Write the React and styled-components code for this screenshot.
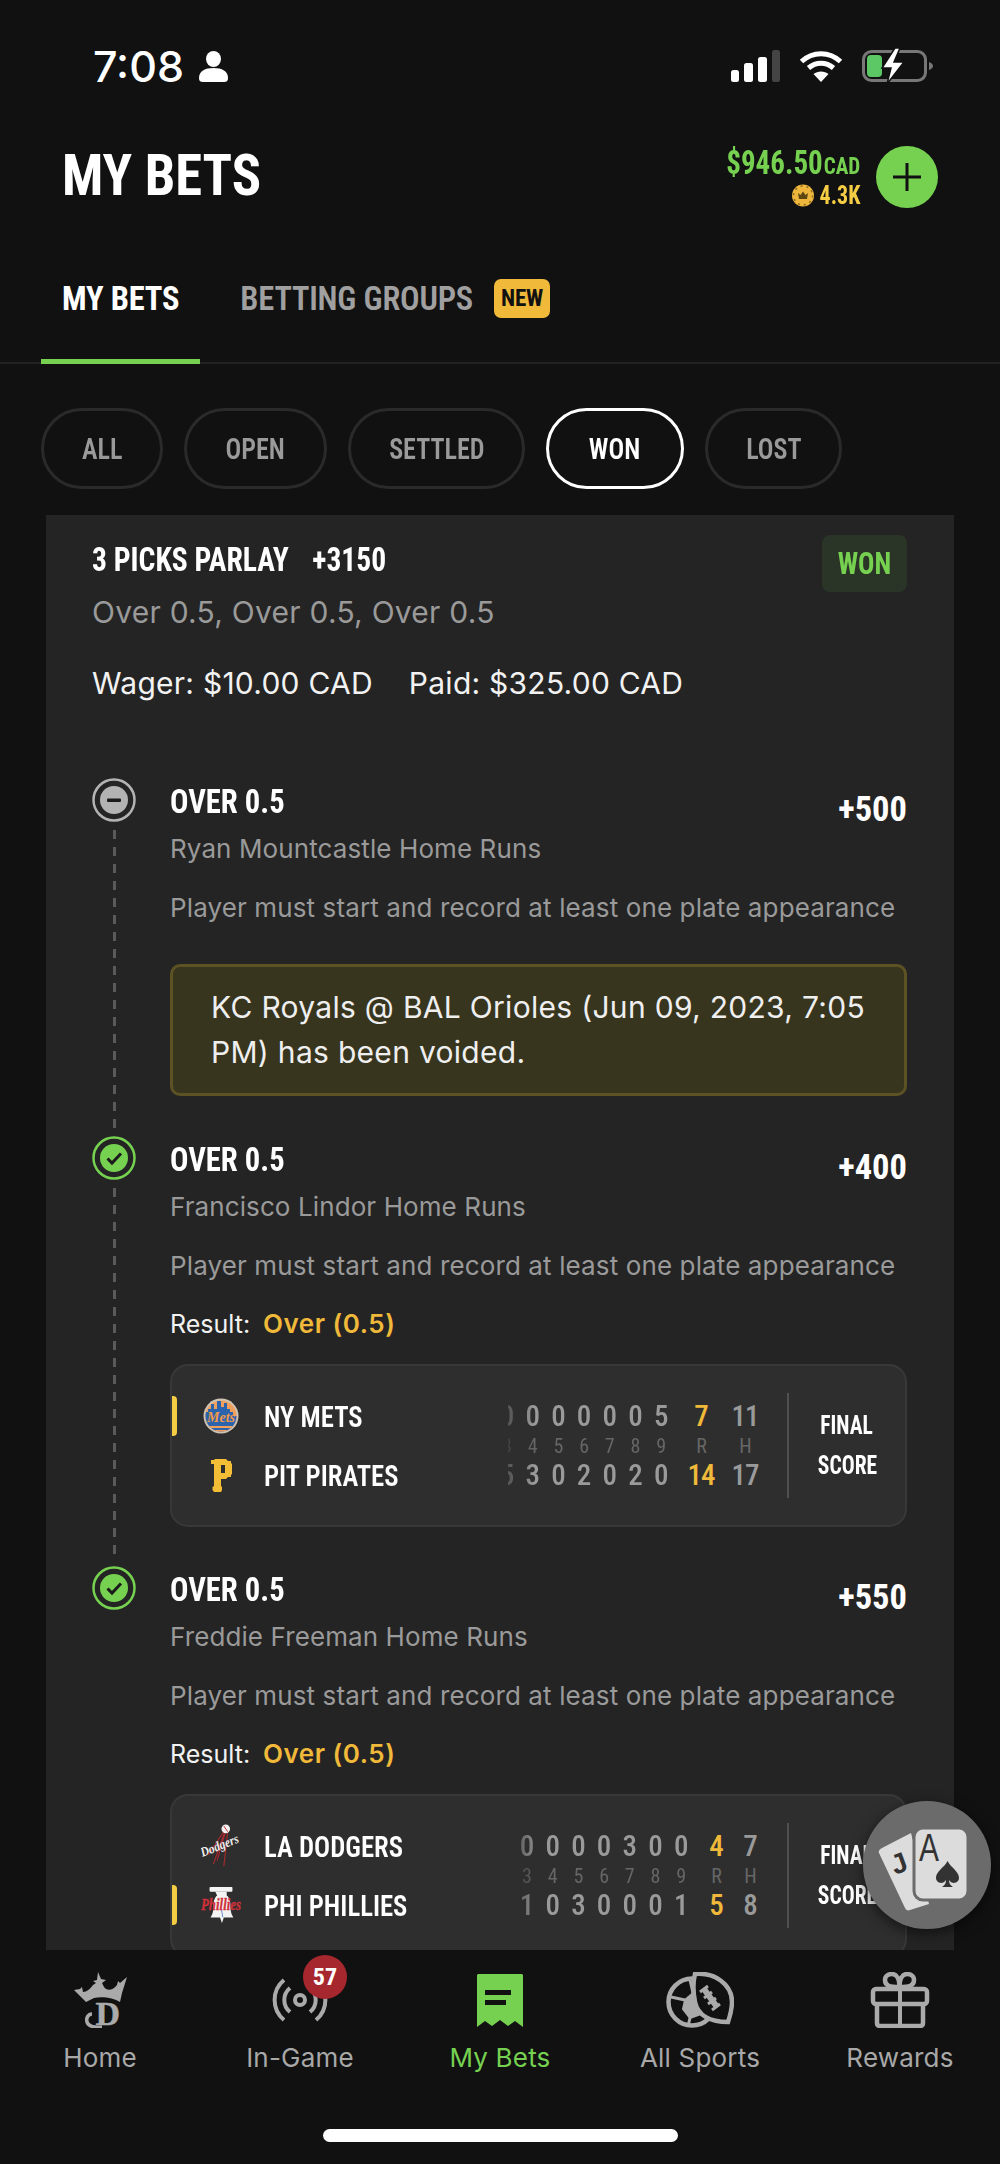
import styled, { createGlobalStyle } from "styled-components";

const narrow = `"Roboto Condensed", "Liberation Sans Narrow", "DejaVu Sans Condensed", sans-serif`;
const body = `Inter, "Noto Sans", sans-serif`;

const GlobalStyle = createGlobalStyle`
  html, body {
    margin: 0;
    padding: 0;
    background: #111111;
  }
  * {
    box-sizing: border-box;
  }
`;

const pills = [
  { label: "ALL", width: 122 },
  { label: "OPEN", width: 143 },
  { label: "SETTLED", width: 177 },
  { label: "WON", width: 138, active: true },
  { label: "LOST", width: 137 },
];

const legs = [
  {
    status: "void",
    odds: "+500",
    player: "Ryan Mountcastle Home Runs",
    voided: "KC Royals @ BAL Orioles (Jun 09, 2023, 7:05 PM) has been voided.",
  },
  {
    status: "won",
    odds: "+400",
    player: "Francisco Lindor Home Runs",
    game: {
      inningsWidth: 166,
      rWidth: 30,
      hWidth: 34,
      labels: [3, 4, 5, 6, 7, 8, 9],
      teams: [
        { name: "NY METS", logo: "mets", winner: true, innings: [0, 0, 0, 0, 0, 0, 5], r: 7, h: 11 },
        { name: "PIT PIRATES", logo: "pirates", innings: [5, 3, 0, 2, 0, 2, 0], r: 14, h: 17 },
      ],
    },
  },
  {
    status: "won",
    odds: "+550",
    player: "Freddie Freeman Home Runs",
    game: {
      inningsWidth: 180,
      rWidth: 20,
      hWidth: 24,
      labels: [3, 4, 5, 6, 7, 8, 9],
      teams: [
        { name: "LA DODGERS", logo: "dodgers", innings: [0, 0, 0, 0, 3, 0, 0], r: 4, h: 7 },
        { name: "PHI PHILLIES", logo: "phillies", winner: true, innings: [1, 0, 3, 0, 0, 0, 1], r: 5, h: 8 },
      ],
    },
  },
];

function Signal() {
  return (
    <svg width="49" height="32" viewBox="0 0 49 32">
      <rect x="0" y="20" width="8" height="12" rx="2.5" fill="#fff" />
      <rect x="13" y="13" width="9" height="19" rx="2.5" fill="#fff" />
      <rect x="27" y="7" width="9" height="25" rx="2.5" fill="#fff" />
      <rect x="41" y="0" width="8" height="32" rx="2.5" fill="#444" />
    </svg>
  );
}

function Wifi() {
  return (
    <svg width="44" height="32" viewBox="0 0 44 32" fill="none" stroke="#fff" strokeWidth="5">
      <path d="M2.5 11.5C13.5 1 30.5 1 41.5 11.5" />
      <path d="M9.5 18C17 11.5 27 11.5 34.5 18" />
      <path d="M22 32L14.5 24C18.5 20.5 25.5 20.5 29.5 24Z" fill="#fff" stroke="none" />
    </svg>
  );
}

function Battery() {
  return (
    <svg width="71" height="36" viewBox="0 0 71 36" fill="none">
      <rect x="1.5" y="3.5" width="62" height="29" rx="8" stroke="#777" strokeWidth="3" />
      <path d="M67 14v8c2.500-.8 4-2.400 4-4s-1.500-3.200-4-4z" fill="#777" />
      <rect x="5" y="7" width="15" height="22" rx="4" fill="#5cc765" />
      <path d="M33 0L20 20h9l-4 16 17-22h-10l6-14z" fill="#fff" stroke="#111" strokeWidth="1.500" />
    </svg>
  );
}

function Person() {
  return (
    <svg width="29" height="31" viewBox="0 0 29 31" fill="#fff">
      <ellipse cx="14.500" cy="8" rx="7.500" ry="8" />
      <path d="M0 27c0-7 6-10 14.500-10S29 20 29 27c0 3-1.500 4-4 4H4c-2.500 0-4-1-4-4z" />
    </svg>
  );
}

function Coin() {
  return (
    <svg width="22" height="23" viewBox="0 0 22 23">
      <circle cx="11" cy="11.500" r="11" fill="#eeb63c" />
      <circle cx="11" cy="11.500" r="9.500" fill="none" stroke="#8a6a1c" strokeWidth="1.500" strokeDasharray="2 4" />
      <path d="M6 9l2.500 2L11 7.500 13.500 11 16 9l-1 6H7z" fill="#5d4712" />
    </svg>
  );
}

function LegIcon({ status }) {
  const colour = status === "won" ? "#76d151" : "#b3b3b3";
  return (
    <svg width="44" height="44" viewBox="0 0 44 44">
      <circle cx="22" cy="22" r="20.500" fill="none" stroke={colour} strokeWidth="2.500" />
      <circle cx="22" cy="22" r="14" fill={colour} />
      {status === "won" ? (
        <path d="M15.500 22.500l4.500 4.500 9-9.500" fill="none" stroke="#1b1b1b" strokeWidth="3" />
      ) : (
        <rect x="15" y="20.500" width="14" height="3.500" rx="1" fill="#1b1b1b" />
      )}
    </svg>
  );
}

function TeamLogo({ logo }) {
  if (logo === "mets") {
    return (
      <svg width="36" height="36" viewBox="0 0 36 36">
        <defs>
          <clipPath id="metsFace">
            <circle cx="18" cy="18" r="15.500" />
          </clipPath>
        </defs>
        <circle cx="18" cy="18" r="17.500" fill="#cfc3b4" />
        <g clipPath="url(#metsFace)">
          <rect width="36" height="36" fill="#f0a05c" />
          <path d="M0 36V14h5v-3h3V6h3v5h3V3h4v6h3V5h3v6h3v3h3v4h6v18z" fill="#2c63ad" />
          <path d="M0 28h36v2H0zM0 32h36v2H0z" fill="#f0a05c" />
        </g>
        <text x="18" y="23.500" textAnchor="middle" fontFamily="Liberation Serif, serif" fontStyle="italic" fontWeight="700" fontSize="14" fill="#f29a4a">Mets</text>
      </svg>
    );
  }
  if (logo === "pirates") {
    return (
      <svg width="22" height="33" viewBox="0 0 22 33" fill="#f3bd35">
        <path
          d="M1 1H4L5 0H16L18 2H21V4L22 5V15L21 16V18H18L16 20H11V27L12 28V31L11 33H4L2.500 31V28L4 27V5H1ZM11 6V14H15V6Z"
          fillRule="evenodd"
        />
      </svg>
    );
  }
  if (logo === "dodgers") {
    return (
      <svg width="42" height="46" viewBox="0 0 42 46">
        <path d="M25 6L8 32M26 7L17 38M28 8L24 44M25 8L13 42" stroke="#a9282d" strokeWidth="1.200" fill="none" />
        <circle cx="26" cy="5" r="4.500" fill="#f2f2f2" />
        <path d="M24 2l4 6" stroke="#c8282e" strokeWidth="1" />
        <text
          x="20"
          y="27"
          textAnchor="middle"
          transform="rotate(-22 20 24)"
          fontFamily="Liberation Serif, serif"
          fontStyle="italic"
          fontWeight="700"
          fontSize="14"
          textLength="42"
          lengthAdjust="spacingAndGlyphs"
          fill="#eeeeee"
        >
          Dodgers
        </text>
      </svg>
    );
  }
  return (
    <svg width="42" height="38" viewBox="0 0 42 38">
      <rect x="9" y="0" width="24" height="5" rx="1" fill="#f4f4f4" />
      <path d="M15 5h12v4c3 2 4 7 4 12 0 5 1 8 3 11H24l-2 6-2-6H10c2-3 3-6 3-11 0-5 1-10 4-12z" fill="#f4f4f4" />
      <path d="M21.500 24l1.500 8" stroke="#3a6fc0" strokeWidth="0.800" />
      <text
        x="21"
        y="24"
        textAnchor="middle"
        fontFamily="Liberation Serif, serif"
        fontStyle="italic"
        fontWeight="700"
        fontSize="18"
        textLength="42"
        lengthAdjust="spacingAndGlyphs"
        fill="#d0303a"
        stroke="#d0303a"
        strokeWidth="0.400"
      >
        Phillies
      </text>
    </svg>
  );
}

function HomeIcon() {
  return (
    <svg width="56" height="56" viewBox="0 0 56 56" fill="#aaa">
      <path d="M2 18L8 17L10 15L11 20C15 20 18 17 21 13L24 11L21 9L25 8L26 0L29 7L34 8L30 11L32 15C35 19 40 19 45 13L46 9L48 11L55 5L50 21L48 30C42 26 30 24 22 26L14 30C10 26 6 22 2 18Z" />
      <text x="36" y="53" textAnchor="middle" fontFamily="Liberation Serif, serif" fontWeight="700" fontSize="34" stroke="#aaa" strokeWidth="0.500">D</text>
      <path d="M20 42C16 42 14 46 15 50C16 54 22 56 30 55" fill="none" stroke="#aaa" strokeWidth="3.500" />
    </svg>
  );
}

function InGameIcon() {
  return (
    <svg width="58" height="44" viewBox="0 0 58 44" fill="none" stroke="#aaa" strokeWidth="4">
      <circle cx="29" cy="22" r="5" />
      <path d="M19 10A15.500 15.500 0 0 0 19 34M39 10A15.500 15.500 0 0 1 39 34" />
      <path d="M13 2A26 26 0 0 0 13 42M45 2A26 26 0 0 1 45 42" />
    </svg>
  );
}

function TicketIcon() {
  return (
    <svg width="46" height="53" viewBox="0 0 46 53">
      <path d="M1 0h44l1 1v52l-8-6-7 5-8-6-8 6-7-5-8 6V1z" fill="#76d151" />
      <rect x="8" y="16" width="26" height="5" fill="#111" />
      <rect x="8" y="26" width="21" height="5" fill="#111" />
    </svg>
  );
}

function SportsIcon() {
  return (
    <svg width="68" height="56" viewBox="0 0 68 56" fill="none" stroke="#aaa" strokeWidth="4.500">
      <circle cx="26" cy="30" r="23.500" />
      <path d="M19 28L27 21L30 34L35 42L24 46L17 37Z" fill="#aaa" strokeWidth="2" />
      <path d="M27 21L24 8M19 28L5 25M24 46L22 54" strokeWidth="3" />
      <path d="M29 2C48 0 66 12 66 30C66 38 64 44 62 50C45 50 32 44 29 30C27 20 27 10 29 2Z" fill="#111" />
      <path d="M38 17L51 35" strokeWidth="6" />
      <path d="M34 20L42 14M38 26L46 20M42 32L50 26M46 38L54 32" strokeWidth="3" />
    </svg>
  );
}

function GiftIcon() {
  return (
    <svg width="60" height="56" viewBox="0 0 60 56" fill="none" stroke="#aaa" strokeWidth="4.500">
      <rect x="3" y="17" width="54" height="15" rx="3" />
      <path d="M7 32V51C7 53 8 54 10 54H50C52 54 53 53 53 51V32" />
      <path d="M30 17V54" strokeWidth="4" />
      <path d="M29.500 15C20 15 15 14 15 8C15 3.500 19 2 22 2C26 2 29.500 6 29.500 15C29.500 6 33 2 37 2C40 2 44 3.500 44 8C44 14 39 15 29.500 15Z" />
    </svg>
  );
}

function CardsIcon() {
  return (
    <svg width="128" height="128" viewBox="0 0 128 128">
      <path d="M19 47L48 32L66 103L47 109C45 110 43 109 42 107L16 52C15 50 17 48 19 47Z" fill="#dcdcdc" />
      <text
        x="36"
        y="72"
        textAnchor="middle"
        transform="rotate(-20 36 62)"
        fontFamily="Liberation Sans, sans-serif"
        fontWeight="700"
        fontSize="28"
        fill="#333"
      >
        J
      </text>
      <rect x="51" y="27" width="54" height="72" rx="9" fill="#dcdcdc" stroke="#6b6b6b" strokeWidth="3" />
      <text
        x="66"
        y="60"
        textAnchor="middle"
        fontFamily="Liberation Sans, sans-serif"
        fontSize="38"
        textLength="20"
        lengthAdjust="spacingAndGlyphs"
        fill="#333"
      >
        A
      </text>
      <path d="M84.600 60C88 67 96 70 96 77C96 82 89 84 86 79C86 82 87 84 90 86H79C82 84 83 82 83 79C80 84 73 82 73 77C73 70 81 67 84.600 60Z" fill="#333" />
    </svg>
  );
}

function ScoreBoard({ game }) {
  return (
    <ScoreBox>
      <TeamList>
        {game.teams.map((team) => (
          <TeamRow key={team.name}>
            <Tick $show={team.winner} />
            <LogoSlot>
              <TeamLogo logo={team.logo} />
            </LogoSlot>
            <TeamName>
              <Squeeze $x={0.89}>{team.name}</Squeeze>
            </TeamName>
          </TeamRow>
        ))}
      </TeamList>
      <Line>
        <LineRow>
          <Innings $width={game.inningsWidth}>
            {game.teams[0].innings.map((v, i) => (
              <Cell key={i}>{v}</Cell>
            ))}
          </Innings>
          <Total $width={game.rWidth} $gold>{game.teams[0].r}</Total>
          <Total $width={game.hWidth}>{game.teams[0].h}</Total>
        </LineRow>
        <LabelRow>
          <Innings $width={game.inningsWidth}>
            {game.labels.map((v) => (
              <Cell key={v}>{v}</Cell>
            ))}
          </Innings>
          <Total $width={game.rWidth}>R</Total>
          <Total $width={game.hWidth}>H</Total>
        </LabelRow>
        <LineRow>
          <Innings $width={game.inningsWidth}>
            {game.teams[1].innings.map((v, i) => (
              <Cell key={i}>{v}</Cell>
            ))}
          </Innings>
          <Total $width={game.rWidth} $gold>{game.teams[1].r}</Total>
          <Total $width={game.hWidth}>{game.teams[1].h}</Total>
        </LineRow>
      </Line>
      <Divider />
      <FinalScore>
        <Squeeze $x={0.86} $origin="center">FINAL</Squeeze>
        <Squeeze $x={0.86} $origin="center">SCORE</Squeeze>
      </FinalScore>
    </ScoreBox>
  );
}

export default function App() {
  return (
    <Page>
      <GlobalStyle />
      <StatusBar>
        <Clock>
          7:08
          <Person />
        </Clock>
        <StatusIcons>
          <Signal />
          <Wifi />
          <Battery />
        </StatusIcons>
      </StatusBar>

      <TitleRow>
        <Title>
          <Squeeze $x={0.94}>MY BETS</Squeeze>
        </Title>
        <Wallet>
          <Balance>
            <Money>
              <Squeeze $x={0.88} $origin="right">
                $946.50<small>CAD</small>
              </Squeeze>
            </Money>
            <Crowns>
              <Coin />
              <Squeeze $x={0.88} $origin="right">4.3K</Squeeze>
            </Crowns>
          </Balance>
          <AddButton>
            <svg width="28" height="28" viewBox="0 0 28 28" stroke="#111" strokeWidth="3">
              <path d="M14 0v28M0 14h28" />
            </svg>
          </AddButton>
        </Wallet>
      </TitleRow>

      <Tabs>
        <Tab $active>MY BETS</Tab>
        <Tab>
          BETTING GROUPS
          <NewBadge>NEW</NewBadge>
        </Tab>
      </Tabs>

      <Pills>
        {pills.map((p) => (
          <Pill key={p.label} $active={p.active} $width={p.width}>
            <Squeeze $x={0.87} $origin="center">{p.label}</Squeeze>
          </Pill>
        ))}
      </Pills>

      <Card>
        <ParlayHead>
          <div>
            <ParlayTitle>
              <Squeeze $x={0.87}>
                3 PICKS PARLAY<ParlayOdds>+3150</ParlayOdds>
              </Squeeze>
            </ParlayTitle>
            <ParlaySub>Over 0.5, Over 0.5, Over 0.5</ParlaySub>
          </div>
          <WonBadge>
            <Squeeze $x={0.88} $origin="center">WON</Squeeze>
          </WonBadge>
        </ParlayHead>
        <Amounts>
          <span>Wager: $10.00 CAD</span>
          <span>Paid: $325.00 CAD</span>
        </Amounts>

        {legs.map((leg, i) => (
          <Leg key={leg.player} $first={i === 0} $gapBelow={leg.voided ? 40 : 39}>
            <Rail>
              <LegIcon status={leg.status} />
              {i < legs.length - 1 && <Dashes />}
            </Rail>
            <LegBody>
              <LegHead>
                <LegTitle>
                  <Squeeze $x={0.9}>OVER 0.5</Squeeze>
                </LegTitle>
                <Odds>{leg.odds}</Odds>
              </LegHead>
              <PlayerName>{leg.player}</PlayerName>
              <Rule>Player must start and record at least one plate appearance</Rule>
              {leg.voided && <VoidBox>{leg.voided}</VoidBox>}
              {leg.game && (
                <>
                  <Result>
                    Result: <b>Over (0.5)</b>
                  </Result>
                  <ScoreBoard game={leg.game} />
                </>
              )}
            </LegBody>
          </Leg>
        ))}
      </Card>

      <Nav>
        <NavItems>
          <NavItem>
            <NavIcon><HomeIcon /></NavIcon>
            Home
          </NavItem>
          <NavItem>
            <NavIcon>
              <InGameIcon />
              <CountBadge>57</CountBadge>
            </NavIcon>
            In-Game
          </NavItem>
          <NavItem $active>
            <NavIcon><TicketIcon /></NavIcon>
            My Bets
          </NavItem>
          <NavItem>
            <NavIcon><SportsIcon /></NavIcon>
            All Sports
          </NavItem>
          <NavItem>
            <NavIcon><GiftIcon /></NavIcon>
            Rewards
          </NavItem>
        </NavItems>
        <HomeBar />
      </Nav>

      <CasinoButton>
        <CardsIcon />
      </CasinoButton>
    </Page>
  );
}

const Page = styled.div`
  position: relative;
  width: 1000px;
  height: 2164px;
  display: flex;
  flex-direction: column;
  overflow: hidden;
  background: #111111;
  color: #fff;
  font-family: ${body};
`;

/* the app's display face is narrower than any installed condensed font */
const Squeeze = styled.span`
  display: inline-block;
  white-space: nowrap;
  transform: scaleX(${(p) => p.$x});
  transform-origin: ${(p) => p.$origin || "left"} center;
`;

const StatusBar = styled.div`
  height: 132px;
  flex: none;
  display: flex;
  align-items: center;
  justify-content: space-between;
  padding: 0 67px 0 93px;
`;

const Clock = styled.div`
  display: flex;
  align-items: center;
  gap: 15px;
  font-size: 43px;
  font-weight: 500;
  line-height: 44px;
`;

const StatusIcons = styled.div`
  display: flex;
  align-items: center;
  gap: 19px;
`;

const TitleRow = styled.div`
  height: 84px;
  flex: none;
  display: flex;
  align-items: center;
  justify-content: space-between;
  padding: 0 62px;
`;

const Title = styled.h1`
  margin: 2px 0 0;
  font-family: ${narrow};
  font-size: 58px;
  font-weight: 700;
  line-height: 60px;
`;

const Wallet = styled.div`
  display: flex;
  align-items: center;
  gap: 16px;
  margin-top: 6px;
`;

const Balance = styled.div`
  display: flex;
  flex-direction: column;
  align-items: flex-end;
  font-family: ${narrow};
  font-weight: 700;
`;

const Money = styled.div`
  color: #76d151;
  font-size: 33px;
  line-height: 34px;

  small {
    font-size: 24px;
    margin-left: 1px;
  }
`;

const Crowns = styled.div`
  display: flex;
  align-items: center;
  color: #f5cd45;
  font-size: 25px;
  line-height: 26px;
`;

const AddButton = styled.div`
  width: 62px;
  height: 62px;
  border-radius: 50%;
  background: #76d151;
  display: flex;
  align-items: center;
  justify-content: center;
`;

const Tabs = styled.div`
  height: 148px;
  flex: none;
  display: flex;
  gap: 19px;
  padding: 0 0 0 41px;
  border-bottom: 2px solid #222222;
`;

const Tab = styled.div`
  display: flex;
  align-items: center;
  height: 148px;
  padding: 22px 21px 0;
  font-family: ${narrow};
  font-size: 32.5px;
  letter-spacing: -0.2px;
  font-weight: ${(p) => (p.$active ? 700 : 600)};
  color: ${(p) => (p.$active ? "#fff" : "#a0a0a0")};
  border-bottom: 5px solid ${(p) => (p.$active ? "#76d151" : "transparent")};
`;

const NewBadge = styled.span`
  margin-left: 21px;
  width: 56px;
  height: 39px;
  border-radius: 7px;
  background: #f0b93a;
  color: #111;
  font-size: 23px;
  font-weight: 700;
  display: flex;
  align-items: center;
  justify-content: center;
`;

const Pills = styled.div`
  flex: none;
  display: flex;
  gap: 21px;
  margin-top: 44px;
  padding-left: 41px;
`;

const Pill = styled.div`
  width: ${(p) => p.$width}px;
  height: 81px;
  border-radius: 41px;
  border: 3px solid ${(p) => (p.$active ? "#fff" : "#2a2a2a")};
  color: ${(p) => (p.$active ? "#fff" : "#9a9a9a")};
  font-family: ${narrow};
  font-size: 30px;
  font-weight: 600;
  display: flex;
  align-items: center;
  justify-content: center;
`;

const Card = styled.div`
  flex: 1;
  min-height: 0;
  overflow: hidden;
  margin: 26px 46px 0;
  padding: 24px 47px 0 46px;
  background: #242424;
`;

const ParlayHead = styled.div`
  display: flex;
  justify-content: space-between;
  align-items: flex-start;
`;

const ParlayTitle = styled.div`
  font-family: ${narrow};
  font-size: 34px;
  font-weight: 700;
  line-height: 40px;
`;

const ParlayOdds = styled.span`
  margin-left: 27px;
`;

const ParlaySub = styled.div`
  margin-top: 13px;
  font-size: 30px;
  letter-spacing: 0.25px;
  line-height: 40px;
  color: #9a9a9a;
`;

const WonBadge = styled.div`
  width: 85px;
  height: 57px;
  margin-top: -4px;
  border-radius: 8px;
  background: #2a3427;
  color: #76d151;
  font-family: ${narrow};
  font-size: 31px;
  font-weight: 700;
  display: flex;
  align-items: center;
  justify-content: center;
`;

const Amounts = styled.div`
  display: flex;
  gap: 36px;
  margin-top: 31px;
  font-size: 30px;
  letter-spacing: 0.25px;
  line-height: 40px;
  color: #f2f2f2;
`;

const Leg = styled.div`
  display: grid;
  grid-template-columns: 78px 1fr;
  margin-top: ${(p) => (p.$first ? "75px" : "0")};
  padding-bottom: ${(p) => p.$gapBelow}px;
`;

const Rail = styled.div`
  display: flex;
  flex-direction: column;
  margin-bottom: -34px;
`;

const Dashes = styled.div`
  flex: 1;
  width: 3px;
  margin: 8px 0 0 21px;
  background: repeating-linear-gradient(to bottom, #5a5a5a 0 9px, transparent 9px 17px);
`;

const LegBody = styled.div`
  min-width: 0;
`;

const LegHead = styled.div`
  height: 40px;
  margin-top: 3px;
  display: flex;
  justify-content: space-between;
  align-items: flex-start;
`;

const LegTitle = styled.div`
  font-family: ${narrow};
  font-size: 34px;
  font-weight: 700;
  line-height: 40px;
`;

const Odds = styled.div`
  margin-top: 8px;
  font-family: ${narrow};
  font-size: 34.5px;
  font-weight: 700;
  line-height: 40px;
`;

const PlayerName = styled.div`
  margin-top: 11px;
  font-size: 26px;
  letter-spacing: 0.1px;
  line-height: 34px;
  color: #9a9a9a;
`;

const Rule = styled.div`
  margin-top: 25px;
  font-size: 26px;
  letter-spacing: 0.12px;
  line-height: 34px;
  color: #9a9a9a;
  white-space: nowrap;
`;

const VoidBox = styled.div`
  height: 132px;
  margin-top: 39px;
  padding: 18px 20px 0 38px;
  border: 3px solid #5c5224;
  border-radius: 10px;
  background: #38351f;
  color: #efefef;
  font-size: 30px;
  letter-spacing: 0.3px;
  line-height: 45px;
`;

const Result = styled.div`
  margin-top: 24px;
  font-size: 25px;
  line-height: 34px;
  color: #f2f2f2;

  b {
    margin-left: 6px;
    font-size: 26px;
    letter-spacing: 0.5px;
    font-weight: 600;
    color: #f0b93a;
  }
`;

const ScoreBox = styled.div`
  height: 163px;
  margin-top: 23px;
  display: flex;
  align-items: center;
  border: 2px solid #383838;
  border-radius: 18px;
  background: #2e2e2e;
`;

const TeamList = styled.div`
  flex: 1;
  display: flex;
  flex-direction: column;
  gap: 23px;
`;

const TeamRow = styled.div`
  height: 36px;
  display: flex;
  align-items: center;
`;

const Tick = styled.div`
  width: 5px;
  height: 40px;
  border-radius: 0 4px 4px 0;
  background: ${(p) => (p.$show ? "#f5cd45" : "transparent")};
`;

const LogoSlot = styled.div`
  width: 40px;
  margin: 0 23px 0 24px;
  display: flex;
  justify-content: center;
  align-items: center;
  height: 36px;
`;

const TeamName = styled.div`
  font-family: ${narrow};
  font-size: 30px;
  font-weight: 600;
  white-space: nowrap;
`;

const Line = styled.div`
  display: flex;
  flex-direction: column;
`;

const LineRow = styled.div`
  height: 36px;
  display: flex;
  align-items: center;
  gap: 12px;
  font-family: ${narrow};
  font-size: 29px;
  font-weight: 500;
  color: #9a9a9a;
`;

const LabelRow = styled(LineRow)`
  height: 23px;
  font-size: 20px;
  font-weight: 400;
  color: #666;
`;

const Innings = styled.div`
  width: ${(p) => p.$width}px;
  display: flex;
  justify-content: flex-end;
  overflow: hidden;
  mask-image: linear-gradient(to right, rgba(0, 0, 0, 0.35), #000 26px);
`;

const Cell = styled.span`
  flex: none;
  width: 25.7px;
  text-align: center;
`;

const Total = styled.span`
  width: ${(p) => p.$width}px;
  text-align: center;
  letter-spacing: -1px;
  color: ${(p) => (p.$gold ? "#f0b93a" : "inherit")};
`;

const Divider = styled.div`
  width: 2px;
  height: 105px;
  margin-left: 25px;
  background: #505050;
`;

const FinalScore = styled.div`
  width: 116px;
  display: flex;
  flex-direction: column;
  align-items: center;
  gap: 10px;
  font-family: ${narrow};
  font-size: 25px;
  font-weight: 700;
  line-height: 30px;
`;

const Nav = styled.nav`
  height: 214px;
  flex: none;
  display: flex;
  flex-direction: column;
  align-items: center;
  background: #111111;
`;

const NavItems = styled.div`
  width: 100%;
  display: grid;
  grid-template-columns: repeat(5, 1fr);
  padding-top: 22px;
`;

const NavItem = styled.div`
  display: flex;
  flex-direction: column;
  align-items: center;
  gap: 13px;
  font-size: 26px;
  letter-spacing: 0.2px;
  line-height: 34px;
  color: ${(p) => (p.$active ? "#76d151" : "#a8a8a8")};
`;

const NavIcon = styled.div`
  position: relative;
  height: 56px;
  display: flex;
  align-items: center;
  justify-content: center;
`;

const CountBadge = styled.span`
  position: absolute;
  top: -17px;
  left: 32px;
  width: 44px;
  height: 44px;
  border-radius: 50%;
  background: #a6272d;
  color: #fff;
  font-family: ${narrow};
  font-size: 24px;
  font-weight: 700;
  display: flex;
  align-items: center;
  justify-content: center;
`;

const HomeBar = styled.div`
  width: 355px;
  height: 13px;
  margin-top: 54px;
  border-radius: 7px;
  background: #fff;
`;

const CasinoButton = styled.div`
  position: absolute;
  left: 863px;
  top: 1801px;
  width: 128px;
  height: 128px;
  border-radius: 50%;
  background: #6b6b6b;
  box-shadow: 0 4px 14px rgba(0, 0, 0, 0.55);
  display: flex;
  align-items: center;
  justify-content: center;
`;
